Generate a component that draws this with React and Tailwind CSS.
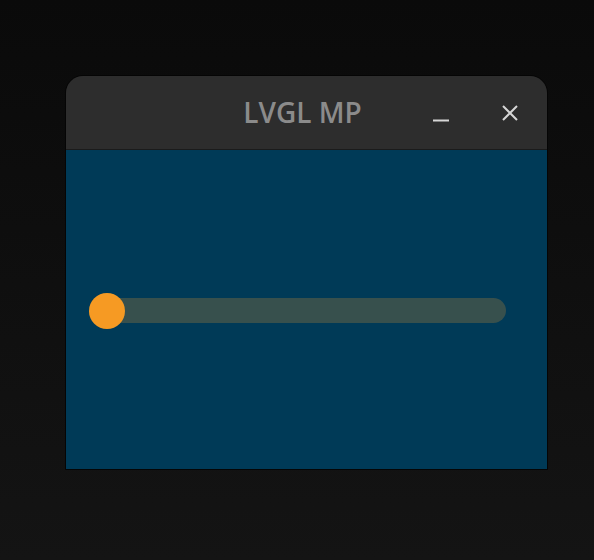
export default function App() {
  return (
    <div className="w-[594px] h-[560px] bg-gradient-to-b from-[#0a0a0a] to-[#141414] pt-[75px] pl-[65px]">
      {/* Window */}
      <div className="w-[483px] h-[395px] flex flex-col border border-[#050505] rounded-t-[18px] overflow-hidden">
        {/* Title bar */}
        <div className="relative h-[74px] shrink-0 bg-[#2d2d2d] border-b border-[#1b1b1b] flex items-center justify-center">
          <span
            className="text-[28px] font-semibold text-[#8b8b8b] pr-[8px] pb-[2px]"
            style={{ fontFamily: '"Open Sans", "DejaVu Sans", sans-serif' }}
          >
            LVGL MP
          </span>
          <div className="absolute right-[28px] top-0 h-full flex items-center gap-[51px]">
            <svg width="18" height="18" viewBox="0 0 18 18" className="mt-[2px]">
              <path d="M1 15.5 H17" stroke="#d6d6d6" strokeWidth="2" />
            </svg>
            <svg width="18" height="18" viewBox="0 0 18 18">
              <path d="M2 2 L16 16 M16 2 L2 16" stroke="#d6d6d6" strokeWidth="2" />
            </svg>
          </div>
        </div>
        {/* Content */}
        <div className="flex-1 bg-[#003a57] flex items-center pl-[23px] pr-[41px] pt-[2px]">
          <div className="relative flex-1 h-[25px] rounded-full bg-[#37504d]">
            <div className="absolute left-0 top-1/2 -translate-y-1/2 w-[36px] h-[36px] rounded-full bg-[#f69a23]" />
          </div>
        </div>
      </div>
    </div>
  );
}
